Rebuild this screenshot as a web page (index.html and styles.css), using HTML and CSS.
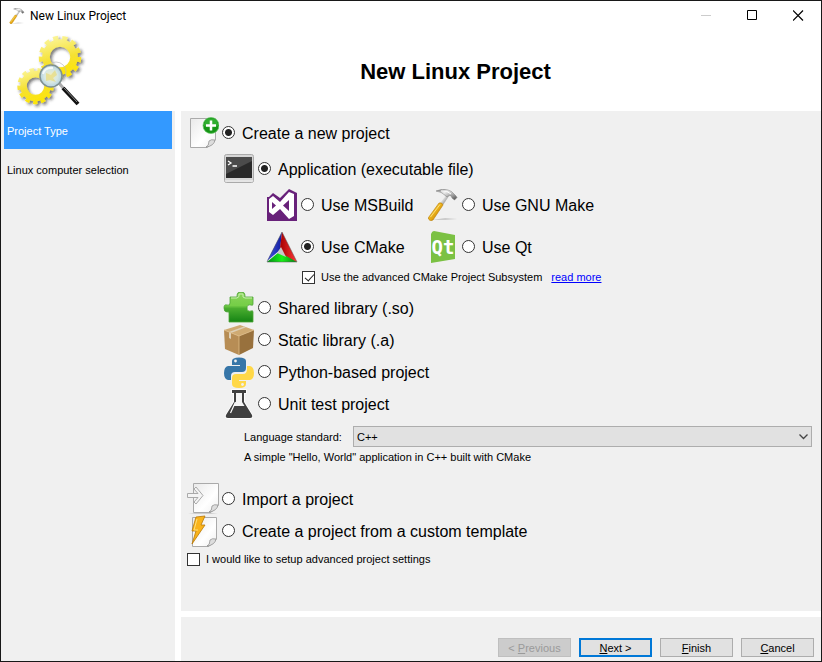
FILE: index.html
```html
<!DOCTYPE html>
<html lang="en">
<head>
  <meta charset="UTF-8">
  <title>New Linux Project</title>
  <link rel="stylesheet" href="styles.css">
</head>
<body>
  <div class="window">

    <div class="titlebar">
      <svg class="app-icon" viewBox="0 0 32 32">
        <defs>
          <linearGradient id="metal" x1="0" y1="0" x2="1" y2="1">
            <stop offset="0" stop-color="#666"/><stop offset=".35" stop-color="#eee"/><stop offset=".7" stop-color="#999"/><stop offset="1" stop-color="#444"/>
          </linearGradient>
          <linearGradient id="wood" x1="0" y1="0" x2="1" y2="1">
            <stop offset=".25" stop-color="#ffd02e"/><stop offset=".8" stop-color="#c98200"/>
          </linearGradient>
          <linearGradient id="paper" x1="0" y1="0" x2="1" y2="1">
            <stop offset="0" stop-color="#e9e9e9"/><stop offset=".6" stop-color="#fff"/><stop offset="1" stop-color="#eee"/>
          </linearGradient>
          <symbol id="hammer" viewBox="0 0 32 32">
            <path d="M5 31 L18 29 L30 30 L18 31Z" fill="#bbb" opacity=".7"/>
            <path d="M13 14 L20 5 L22 7 L16 16Z" fill="url(#metal)"/>
            <path d="M1.500 28.500 L12 14 Q15 13 16 16 L6 31 Q3 33 1.500 30Z" fill="url(#wood)" stroke="#b67a08" stroke-width=".6"/>
            <path d="M3.500 28 L13 15.500" stroke="#ffe890" stroke-width=".8"/>
            <path d="M9 2 Q16 -1 21 1 Q25 2 27 5 L29 7 L30 8.500 L27.500 11 L25 9 Q25 6 22 6.500 L20 8 L17 5.500 Q15 3 9 2Z" fill="url(#metal)" stroke="#777" stroke-width=".5"/>
            <path d="M14 2 Q20 1 24 5" stroke="#fff" stroke-width="1" fill="none"/>
          </symbol>
        </defs>
        <use href="#hammer"/>
      </svg>
      <span class="caption">New Linux Project</span>
      <button class="winbtn" aria-label="Minimize" disabled>
        <svg viewBox="0 0 11 11"><path d="M0 5.500H10" stroke="#ccc"/></svg>
      </button>
      <button class="winbtn" aria-label="Maximize">
        <svg viewBox="0 0 11 11"><path d="M.5 .5H9.500V9.500H.5Z" fill="none" stroke="#000"/></svg>
      </button>
      <button class="winbtn" aria-label="Close">
        <svg viewBox="0 0 11 11"><path d="M0 .5L10 10.500M10 .5L0 10.500" stroke="#000" stroke-width="1.200"/></svg>
      </button>
    </div>

    <header class="header">
      <svg class="gears" viewBox="14 32 76 76">
        <defs>
          <linearGradient id="gold" gradientUnits="userSpaceOnUse" x1="50" y1="35" x2="62" y2="78">
            <stop offset="0" stop-color="#fbf6a0"/><stop offset=".55" stop-color="#f5e132"/><stop offset="1" stop-color="#ffe600"/>
          </linearGradient>
          <linearGradient id="gold2" gradientUnits="userSpaceOnUse" x1="28" y1="66" x2="40" y2="104">
            <stop offset="0" stop-color="#fbf6a0"/><stop offset=".5" stop-color="#f5e132"/><stop offset="1" stop-color="#ffe600"/>
          </linearGradient>
          <radialGradient id="glass"><stop offset="0" stop-color="#f4efbe"/><stop offset=".6" stop-color="#d7e8e4"/><stop offset="1" stop-color="#b4d2e0"/></radialGradient>
          <filter id="shade" x="-20%" y="-20%" width="150%" height="150%"><feDropShadow dx="2" dy="2" stdDeviation="1.500" flood-color="#222" flood-opacity=".6"/></filter>
        </defs>
        <g fill="none" stroke="url(#gold)" filter="url(#shade)">
          <circle cx="60" cy="56" r="14" stroke-width="7.500"/>
          <circle cx="60" cy="56" r="18.500" stroke-width="5.500" pathLength="26" stroke-dasharray="1.100 .9"/>
        </g>
        <g fill="none" stroke="url(#gold2)" filter="url(#shade)">
          <circle cx="35.500" cy="85" r="12" stroke-width="6.500"/>
          <circle cx="35.500" cy="85" r="15.700" stroke-width="5" pathLength="26" stroke-dasharray="1.100 .9"/>
        </g>
        <circle cx="56" cy="71" r="10" fill="none" stroke="#bbb" stroke-width="1" opacity=".7"/>
        <path d="M59 82 L64 88" stroke="#aaa" stroke-width="3"/>
        <path d="M63 87 L78 103" stroke="#111" stroke-width="4"/>
        <path d="M64 87 L77 101" stroke="#888" stroke-width="1"/>
        <circle cx="51" cy="75" r="11" fill="url(#glass)" stroke="#7f9191" stroke-width="1.500"/>
        <path d="M46 72 L51 74 L55 69 L57 74 L53 77 L56 81 L50 79 L46 80Z" fill="#e8dc7c" opacity=".7"/>
        <path d="M43 73 Q45 66 53 67" fill="none" stroke="#fff" stroke-width="2" opacity=".8"/>
      </svg>
      <h1>New Linux Project</h1>
    </header>

    <div class="content">
      <nav class="sidebar">
        <a class="step active" href="#type">Project Type</a>
        <a class="step" href="#computer">Linux computer selection</a>
      </nav>

      <div class="right">
        <main class="page" id="type">
          <div class="row tall">
            <svg class="icon" viewBox="0 0 32 32">
              <path d="M3.500 1.500H28.500V23L20.500 30.500H3.500Z" fill="url(#paper)" stroke="#aaa"/>
              <path d="M28 23 Q24 22 22 24 Q22 29 19 30 Q27 29 28 23Z" fill="#ddd" stroke="#888" stroke-width=".7"/>
              <circle cx="24" cy="8.500" r="8" fill="#159415" stroke="#63c763" stroke-width=".7"/>
              <path d="M17 9 Q17 1 24 1.500 Q31 1 31 9 Q24 12 17 9Z" fill="#4cc84c" opacity=".5"/>
              <path d="M24 3.500V13.500M19 8.500H29" stroke="#fff" stroke-width="2.500"/>
            </svg>
            <label><input type="radio" name="kind" checked>Create a new project</label>
          </div>

          <div class="row tall indent">
            <svg class="icon" viewBox="0 0 32 32">
              <rect x="1.500" y="1.500" width="29" height="28" rx="2" fill="#d6d6d6" stroke="#aaa"/>
              <rect x="3" y="4" width="26" height="21" fill="#292929"/>
              <path d="M3 4H29V8L3 21Z" fill="#4b4b4b"/>
              <path d="M5 8L8 10L5 12M9.500 13H14" stroke="#fff" stroke-width="1.300" fill="none"/>
              <path d="M2 28H30" stroke="#f5f5f5"/>
            </svg>
            <label><input type="radio" name="output" checked>Application (executable file)</label>
          </div>

          <div class="tools">
            <div class="row tall">
              <svg class="icon" viewBox="0 0 32 32">
                <path d="M1 8H3L7 4L14 9L23 0L31 4V32H1Z" fill="#68217a"/>
                <path fill-rule="evenodd" d="M3 10L7 7L14 13L23 3L28 5V27L23 30L14 20L7 26L3 23ZM6 13V20L10 16.500ZM17 16.500L23 22V11Z" fill="#fff"/>
              </svg>
              <label><input type="radio" name="tool">Use MSBuild</label>
            </div>
            <div class="row tall">
              <svg class="icon" viewBox="0 0 32 32"><use href="#hammer"/></svg>
              <label><input type="radio" name="tool">Use GNU Make</label>
            </div>
            <div class="row tall">
              <svg class="icon" viewBox="0 0 32 32">
                <defs>
                  <linearGradient id="cblue"><stop offset="0" stop-color="#4656e8"/><stop offset="1" stop-color="#101c9d"/></linearGradient>
                  <linearGradient id="cred"><stop offset="0" stop-color="#a50000"/><stop offset="1" stop-color="#ff3a3a"/></linearGradient>
                  <linearGradient id="cgreen"><stop offset="0" stop-color="#008c16"/><stop offset=".5" stop-color="#19f019"/><stop offset="1" stop-color="#087d13"/></linearGradient>
                </defs>
                <path d="M16 1L1 30L14 19Z" fill="url(#cblue)"/>
                <path d="M16 1L14 17L19 26L31 31Z" fill="url(#cred)"/>
                <path d="M1 31L13 21L31 31Z" fill="url(#cgreen)"/>
                <path d="M15 16L11 22L20 26Z" fill="#c9c9c9"/>
                <path d="M16 1L1 31H31Z" fill="none" stroke="#555" stroke-width=".5"/>
              </svg>
              <label><input type="radio" name="tool" checked>Use CMake</label>
            </div>
            <div class="row tall">
              <svg class="icon" viewBox="0 0 32 32">
                <path d="M7 0Q5 0 4 3V32L28 28V4Z" fill="#7bc143"/>
                <text class="qt" x="16" y="23" text-anchor="middle">Qt</text>
              </svg>
              <label><input type="radio" name="tool">Use Qt</label>
            </div>
          </div>

          <div class="option advanced">
            <label><input type="checkbox" checked>Use the advanced CMake Project Subsystem</label>
            <a href="#more">read more</a>
          </div>

          <div class="row indent">
            <svg class="icon" viewBox="0 0 32 32">
              <defs><linearGradient id="leaf" x1="0" y1="0" x2="0" y2="1"><stop offset="0" stop-color="#8bd45b"/><stop offset=".45" stop-color="#75ce47"/><stop offset=".55" stop-color="#4aad2f"/><stop offset="1" stop-color="#158414"/></linearGradient></defs>
              <path d="M7 5H13Q15 5 14 3Q14 0 18 0Q22 0 22 3Q21 5 23 5H30V12Q30 14 28 13Q24 12 24 16Q24 20 28 19Q30 18 30 20V30H6V21Q6 19 4 20Q1 20 1 16Q1 12 4 13Q7 14 7 11Z" fill="url(#leaf)" stroke="#4ca336" stroke-width=".8"/>
              <path d="M8 6H14Q17 5 16 2H20Q19 6 22 6H29" fill="none" stroke="#c9efb0"/>
            </svg>
            <label><input type="radio" name="output">Shared library (.so)</label>
          </div>
          <div class="row indent">
            <svg class="icon" viewBox="0 0 32 32">
              <path d="M1 6L17 1L31 6L16 12Z" fill="#cfaa72"/>
              <path d="M1 6L16 12V31L2 25Z" fill="#b78d55"/>
              <path d="M31 6L16 12V31L30 24Z" fill="#98713d"/>
              <path d="M6 8L21 2.500L23 3.300L8 9V15L6 14Z" fill="#ddd0b8"/>
              <path d="M1 6L16 12L31 6M16 12V31" stroke="#e0bd87" stroke-width=".8" fill="none"/>
            </svg>
            <label><input type="radio" name="output">Static library (.a)</label>
          </div>
          <div class="row indent">
            <svg class="icon" viewBox="0 0 32 32">
              <path d="M16 1.500Q9 1.500 9 5V9H17V10H5Q1 11 1 17Q1 23 5 24H8V20Q8 16 12 16H19Q23 16 23 12V5Q23 1.500 16 1.500Z" fill="#3776a8"/>
              <path d="M24 10H27Q31 11 31 17Q31 23 27 24H16V25H23V28Q23 32 16 32Q9 32 9 28V22Q9 18 13 18H20Q24 18 24 13Z" fill="#ffd848"/>
              <circle cx="12.500" cy="5" r="1.400" fill="#f0f0f0"/><circle cx="19.500" cy="28.500" r="1.400" fill="#f0f0f0"/>
            </svg>
            <label><input type="radio" name="output">Python-based project</label>
          </div>
          <div class="row indent">
            <svg class="icon" viewBox="0 0 32 32">
              <path d="M9 2H23V5H21V14L29 27Q30 30 27 30H5Q2 30 3 27L11 14V5H9Z" fill="#404040" stroke="#fff" stroke-width="1.500" paint-order="stroke"/>
              <path d="M13 5H19V14L21.500 18H10.500L13 14Z" fill="#f4f4f4"/>
              <path d="M12.500 14L7.500 25" fill="none" stroke="#fff" stroke-width="1.200"/>
            </svg>
            <label><input type="radio" name="output">Unit test project</label>
          </div>

          <div class="language">
            <label for="standard">Language standard:</label>
            <div class="dropdown">
              <select id="standard"><option>C++</option></select>
              <svg class="arrow" viewBox="0 0 9 6"><path d="M.5 .5L4.500 4.500L8.500 .5" fill="none" stroke="#444" stroke-width="1.300"/></svg>
            </div>
          </div>
          <p class="hint">A simple "Hello, World" application in C++ built with CMake</p>

          <div class="row">
            <svg class="icon" viewBox="0 0 32 32">
              <path d="M1 31Q16 28 31 31Z" fill="#ccc"/>
              <path d="M6.500 .5H31.500V22L24 29.500H6.500Z" fill="url(#paper)" stroke="#aaa"/>
              <path d="M31 22Q27 21 25 23Q25 28 22 29Q30 28 31 22Z" fill="#ddd" stroke="#888" stroke-width=".7"/>
              <path d="M.5 10.500H11L7 6L9 4L16 12.500L9 21L7 19L11 14.500H.5Z" fill="#f4f4f4" stroke="#aaa"/>
            </svg>
            <label><input type="radio" name="kind">Import a project</label>
          </div>
          <div class="row">
            <svg class="icon" viewBox="0 0 32 32">
              <path d="M5.500 2.500H29.500V24L22 31.500H5.500Z" fill="url(#paper)" stroke="#aaa"/>
              <path d="M29 24Q25 23 23 25Q23 30 20 31Q28 30 29 24Z" fill="#ddd" stroke="#888" stroke-width=".7"/>
              <path d="M9 2L18 1L14 10H18L5 29L9 16H5Z" fill="#f9b31b" stroke="#b97907" stroke-width=".8"/>
              <path d="M10 4L7 15H11" fill="none" stroke="#ffe17a"/>
            </svg>
            <label><input type="radio" name="kind">Create a project from a custom template</label>
          </div>
          <div class="option">
            <label><input type="checkbox">I would like to setup advanced project settings</label>
          </div>
        </main>

        <footer class="footer">
          <button class="btn" disabled>&lt; <u>P</u>revious</button>
          <button class="btn primary"><u>N</u>ext &gt;</button>
          <button class="btn"><u>F</u>inish</button>
          <button class="btn"><u>C</u>ancel</button>
        </footer>
      </div>
    </div>
  </div>
</body>
</html>
```

FILE: styles.css
```css
* {
  box-sizing: border-box;
}
body {
  margin: 0;
  font-family: "Liberation Sans", Arial, sans-serif;
  font-size: 11px;
  color: #000;
}
.window {
  display: flex;
  flex-direction: column;
  min-height: 100vh;
  border: 1px solid #181818;
  background: #fff;
}
svg {
  display: block;
  flex: none;
}

/* title bar */
.titlebar {
  display: flex;
  align-items: center;
  height: 29px;
  padding-left: 8px;
}
.app-icon {
  width: 16px;
  height: 16px;
}
.caption {
  flex: 1;
  padding-left: 5px;
  font: 12px Roboto, "Open Sans", sans-serif;
}
.winbtn {
  display: flex;
  align-items: center;
  justify-content: center;
  width: 46px;
  height: 29px;
  padding: 0;
  border: none;
  background: none;
}
.winbtn svg {
  width: 11px;
  height: 11px;
}

/* header */
.header {
  display: flex;
  align-items: center;
  height: 81px;
  padding-left: 13px;
}
.gears {
  width: 76px;
  height: 76px;
}
h1 {
  flex: 1;
  margin: 0;
  padding-top: 2px;
  font-size: 22px;
  text-align: center;
}

.content {
  display: flex;
  flex: 1;
  gap: 6px;
}
.sidebar {
  width: 174px;
  padding: 0 3px;
  background: #f0f0f0;
}
.step {
  display: flex;
  align-items: center;
  height: 38px;
  margin-bottom: 1px;
  padding: 2px 3px 0;
  color: #000;
  text-decoration: none;
}
.step.active {
  background: #3399ff;
  color: #fff;
}
.right {
  display: flex;
  flex: 1;
  flex-direction: column;
  gap: 6px;
}
.page {
  flex: 1;
  padding: 4px 9px 4px 6px;
  background: #f0f0f0;
}

/* project options */
.row {
  display: flex;
  align-items: center;
  gap: 3px;
  height: 32px;
  font-size: 16px;
}
.tall {
  height: 36px;
}
.indent {
  padding-left: 36px;
}
.icon {
  width: 32px;
  height: 32px;
}
.row label {
  display: flex;
  align-items: center;
  gap: 7px;
  padding-top: 2px;
}
.tools {
  display: grid;
  grid-template-columns: 161px auto;
  row-gap: 6px;
  padding-left: 79px;
}
.qt {
  font: bold 20px "Open Sans Condensed", "Noto Sans Mono", "DejaVu Sans Condensed", sans-serif;
  font: bold 19px "DejaVu Sans Mono", monospace;
  fill: #fff;
}
input {
  flex: none;
  width: 13px;
  height: 13px;
  margin: 0;
  border: 1px solid #333;
  background: #fff;
  appearance: none;
}
input[type="radio"] {
  margin-bottom: 3px;
  border-radius: 50%;
}
input[type="radio"]:checked {
  background: radial-gradient(circle, #222 3px, #fff 4px);
}
input[type="checkbox"] {
  position: relative;
}
input[type="checkbox"]:checked::after {
  content: "";
  position: absolute;
  left: 4px;
  top: 0;
  width: 4px;
  height: 8px;
  border: solid #222;
  border-width: 0 1px 1px 0;
  transform: rotate(42deg);
}
.option {
  display: flex;
  align-items: center;
  gap: 9px;
  height: 24px;
}
.option label {
  display: flex;
  align-items: center;
  gap: 6px;
}
.advanced {
  margin-bottom: 3px;
  padding-left: 115px;
}
.option a {
  color: #0000ff;
}

.language {
  display: flex;
  align-items: center;
  margin-top: 6px;
  padding-left: 57px;
}
.language label {
  width: 109px;
}
.dropdown {
  position: relative;
  flex: 1;
}
select {
  display: block;
  width: 100%;
  height: 21px;
  padding: 0 3px;
  border: 1px solid #adadad;
  border-radius: 0;
  background: #e1e1e1;
  color: #000;
  font: inherit;
  appearance: none;
}
.arrow {
  position: absolute;
  right: 4px;
  top: 8px;
  width: 9px;
  height: 6px;
  pointer-events: none;
}
.hint {
  margin: 0 0 16px;
  padding-left: 57px;
  line-height: 20px;
}

/* buttons */
.footer {
  display: flex;
  align-items: flex-end;
  justify-content: flex-end;
  gap: 8px;
  height: 44px;
  padding: 0 7px 4px;
  background: #f0f0f0;
}
.btn {
  width: 73px;
  height: 19px;
  padding: 0;
  border: 1px solid #adadad;
  background: #e1e1e1;
  color: #000;
  font: inherit;
}
.btn.primary {
  border: 2px solid #0078d7;
}
.btn:disabled {
  border-color: #bfbfbf;
  background: #ccc;
  color: #9a9a9a;
}
```
